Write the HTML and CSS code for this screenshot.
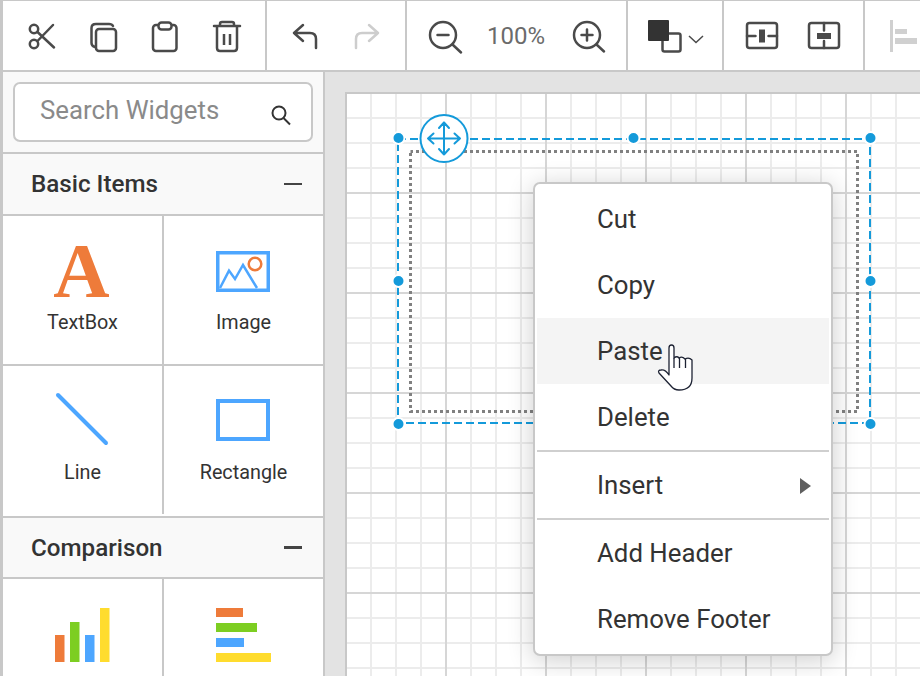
FILE: index.html
```html
<!DOCTYPE html>
<html lang="en">
<head>
<meta charset="utf-8">
<title>Report Designer</title>
<link rel="stylesheet" href="styles.css">
</head>
<body>
<div class="app">
  <header class="toolbar">
    <div class="tgroup g1">
      <button class="tbtn"><svg class="ico" viewBox="0 0 36 36"><circle cx="11" cy="11" r="4.2"/><circle cx="11" cy="26" r="4.2"/><path d="M30 7 14.500 23M14.500 14 31 29.500"/></svg></button>
      <button class="tbtn"><svg class="ico" viewBox="0 0 36 36"><rect x="11" y="11" width="20" height="22" rx="3"/><path d="M28 8Q27 6 24 6H11Q6.500 6 6.500 10V25Q6.500 28 10 29"/></svg></button>
      <button class="tbtn"><svg class="ico" viewBox="0 0 36 36"><rect x="6" y="7" width="23.500" height="26" rx="3"/><rect class="wf" x="11.500" y="4.500" width="13" height="7" rx="3"/></svg></button>
      <button class="tbtn"><svg class="ico" viewBox="0 0 36 36"><path d="M5 8H31M11 8V6Q11 4 13 4H23Q25 4 25 6V8M8 8V30Q8 33 11 33H25Q28 33 28 30V8"/><path class="thick" d="M15 16V27M21 16V27"/></svg></button>
    </div>
    <div class="tgroup g2">
      <button class="tbtn"><svg class="ico" viewBox="0 0 36 36"><path d="M16 7 7 15 16 23M7 15H23Q29 15 29 21V30"/></svg></button>
      <button class="tbtn off"><svg class="ico" viewBox="0 0 36 36"><path d="M20 7 29 15 20 23M29 15H13Q7 15 7 21V30"/></svg></button>
    </div>
    <div class="tgroup g3">
      <button class="tbtn"><svg class="ico" viewBox="0 0 36 36"><circle cx="17" cy="17" r="13"/><path d="M11.500 17H22.500M26.500 26.500 35 34.500"/></svg></button>
      <span class="zoomval">100%</span>
      <button class="tbtn"><svg class="ico" viewBox="0 0 36 36"><circle cx="17" cy="17" r="13"/><path d="M11.500 17H22.500M17 11.500V22.500M26.500 26.500 34 33.500"/></svg></button>
    </div>
    <div class="tgroup g4">
      <svg class="colorico" viewBox="0 0 60 36"><rect class="c-back" x="15.500" y="15.500" width="18" height="18" rx="2"/><rect class="c-front" x="1" y="2" width="21" height="21" rx="1"/><path class="c-chev" d="M42 18 49 24.500 56 18"/></svg>
    </div>
    <div class="tgroup g5">
      <button class="tbtn"><svg class="ico" viewBox="0 0 36 36"><rect x="3" y="5" width="30" height="25" rx="2.500"/><path d="M3 18H11.500M24.500 18H33"/><rect class="fill" x="15" y="11.500" width="6" height="13"/></svg></button>
      <button class="tbtn"><svg class="ico" viewBox="0 0 36 36"><rect x="3" y="5" width="30" height="25" rx="2.500"/><path d="M18 5V12.500M18 23V30"/><rect class="fill" x="11" y="15" width="14" height="6"/></svg></button>
    </div>
    <div class="tgroup g6">
      <svg class="alignico" viewBox="0 0 31 36"><rect x="0" y="2" width="3" height="32"/><rect x="5" y="11" width="12" height="5"/><rect x="5" y="20" width="22" height="6"/></svg>
    </div>
  </header>
  <div class="main">
    <aside class="sidebar">
      <div class="searchwrap">
        <div class="search">
          <span class="search-text">Search Widgets</span>
          <svg class="search-ico" viewBox="0 0 22 22"><circle cx="9" cy="9" r="6.500"/><path d="M13.500 14 20 20.500"/></svg>
        </div>
      </div>
      <div class="sechead"><span>Basic Items</span><i class="minus"></i></div>
      <div class="cells">
        <div class="cell row1"><span class="glyph-a">A</span><span class="lbl lbl-a">TextBox</span></div>
        <div class="cell row1"><svg class="wicon" viewBox="0 0 54 50"><rect class="blue-s" x="1.750" y="6.750" width="50.500" height="37.500"/><path class="blue-s thin" d="M4 42 13 24.600 19 33 27 19 41 42"/><circle class="org-s" cx="39" cy="18" r="6.300"/></svg><span class="lbl">Image</span></div>
        <div class="cell row2 short"><svg class="wicon" viewBox="0 0 54 50"><path class="blue-s round" d="M3 2 51 50"/></svg><span class="lbl">Line</span></div>
        <div class="cell row2"><svg class="wicon" viewBox="0 0 54 50"><rect class="blue-s wide" x="2" y="8" width="50" height="38"/></svg><span class="lbl">Rectangle</span></div>
      </div>
      <div class="sechead sec2"><span>Comparison</span><i class="minus"></i></div>
      <div class="cells">
        <div class="cell row3"><svg class="wicon" viewBox="0 0 56 56"><rect class="o" x="1" y="27" width="9.500" height="27"/><rect class="g" x="16" y="14" width="9.500" height="40"/><rect class="b" x="31" y="27" width="9.500" height="27"/><rect class="y" x="46" y="0" width="9.500" height="54"/></svg></div>
        <div class="cell row3"><svg class="wicon" viewBox="0 0 56 56"><rect class="o" x="1" y="0" width="27" height="9"/><rect class="g" x="1" y="15" width="41" height="9"/><rect class="b" x="1" y="30" width="28" height="9"/><rect class="y" x="1" y="45" width="55" height="9"/></svg></div>
      </div>
    </aside>
    <section class="workspace">
      <div class="canvas">
        <svg class="overlay" width="573" height="582" viewBox="347 94 573 582">
          <rect class="dots" x="410.500" y="151.500" width="447" height="260"/>
          <rect class="dash" x="398" y="139" width="472" height="284"/>
          <g class="handles">
            <circle cx="398.500" cy="138" r="6"/><circle cx="633.500" cy="138" r="6"/><circle cx="870.500" cy="138" r="6"/>
            <circle cx="398.500" cy="281" r="6"/><circle cx="870.500" cy="281" r="6"/>
            <circle cx="398.500" cy="424" r="6"/><circle cx="870.500" cy="424" r="6"/>
          </g>
          <circle class="mover" cx="444" cy="138.500" r="23.500"/>
          <path class="arrows" d="M428 138.500H460M444 122.500V154.500M433.500 133.500 428 138.500 433.500 143.500M454.500 133.500 460 138.500 454.500 143.500M439 128 444 122.500 449 128M439 149 444 154.500 449 149"/>
        </svg>
        <ul class="menu">
          <li>Cut</li>
          <li>Copy</li>
          <li class="hover">Paste</li>
          <li>Delete</li>
          <li class="sep"></li>
          <li class="sub">Insert<i class="tri"></i></li>
          <li class="sep"></li>
          <li>Add Header</li>
          <li>Remove Footer</li>
        </ul>
        <svg class="hand" width="42" height="52" viewBox="655 342 42 52"><path class="hand-o" d="M669 375V348Q669 345 671.500 345Q674 345 674 348V358Q677 355.500 679 358Q682 356 685 359Q689 357 692 360V378Q692 390 679 390Q674 390 671 386L659 373Q657.500 370 661 370Q665 369 669 375Z"/><path class="hand-l" d="M674 358V368M679.500 358V368M685.500 359V368"/></svg>
      </div>
    </section>
  </div>
</div>
</body>
</html>
```
FILE: styles.css
```css
* { box-sizing: border-box; }
html, body { margin: 0; padding: 0; height: 100%; overflow: hidden; }
body { font-family: Roboto, "Liberation Sans", sans-serif; color: #333; background: #fff; }
.app { width: 920px; height: 676px; display: flex; flex-direction: column; border-left: 3px solid #c8c8c8; border-top: 1px solid #c8c8c8; overflow: hidden; }

.toolbar { height: 71px; flex: none; display: flex; background: #fff; border-bottom: 2px solid #c8c8c8; }
.tgroup { display: flex; align-items: center; border-right: 2px solid #c8c8c8; height: 100%; flex: none; }
.g1 { width: 264px; padding-left: 7px; }
.g2 { width: 140px; padding-left: 7px; }
.g3 { width: 221px; padding-left: 6px; }
.g4 { width: 96px; justify-content: center; }
.g5 { width: 141px; padding-left: 7px; }
.g6 { flex: 1; border-right: 0; padding-left: 25px; }
.tbtn { width: 62px; height: 36px; padding: 0; margin: 0; border: 0; background: none; display: flex; align-items: center; justify-content: center; }
.ico { width: 36px; height: 36px; fill: none; stroke: #4a4a4a; stroke-width: 2.500; stroke-linecap: round; stroke-linejoin: round; overflow: visible; }
.ico .wf { fill: #fff; }
.ico .thick { stroke-width: 2.500; stroke-linecap: butt; }
.ico .fill { fill: #4a4a4a; stroke: none; }
.off .ico { stroke: #cdcdcd; }
.zoomval { width: 82px; text-align: center; font-size: 24px; color: #6b6b6b; flex: none; }
.colorico { width: 60px; height: 36px; margin-left: 3px; overflow: visible; }
.c-front { fill: #333; }
.c-back { fill: #fff; stroke: #4a4a4a; stroke-width: 2.500; }
.c-chev { fill: none; stroke: #4a4a4a; stroke-width: 1.500; }
.alignico { width: 31px; height: 36px; fill: #d0d0d0; }

.main { flex: 1; display: flex; min-height: 0; }
.sidebar { width: 322px; flex: none; display: flex; flex-direction: column; background: #fff; border-right: 2px solid #c8c8c8; }
.searchwrap { height: 82px; flex: none; padding: 10px 10px 0; background: #f9f9f9; border-bottom: 2px solid #c8c8c8; }
.search { height: 60px; background: #fff; border: 2px solid #c8c8c8; border-radius: 7px; display: flex; align-items: center; justify-content: space-between; padding: 0 19px 0 25px; }
.search-text { font-size: 25.800px; color: #8a8a8a; margin-top: -5px; }
.search-ico { width: 22px; height: 22px; margin-top: 5px; fill: none; stroke: #333; stroke-width: 2; }
.sechead { height: 62px; flex: none; display: flex; align-items: center; justify-content: space-between; background: #f9f9f9; border-bottom: 2px solid #c8c8c8; padding: 0 21px 0 28px; font-size: 24.200px; font-weight: 500; color: #333; }
.sec2 { border-top: 2px solid #c8c8c8; height: 63px; }
.minus { display: block; width: 18px; height: 2.500px; background: #444; }
.cells { display: grid; grid-template-columns: 161px 159px; }
.cell { display: flex; flex-direction: column; align-items: center; border-bottom: 2px solid #c8c8c8; overflow: hidden; }
.cell:nth-child(odd) { border-right: 2px solid #c8c8c8; }
.row1 { height: 150px; padding-top: 28px; }
.row2 { height: 150px; padding-top: 27px; border-bottom: 0; }
.row2.short { height: 148px; }
.row3 { height: 100px; padding-top: 29px; border-bottom: 0; }
.glyph-a { font-family: "Liberation Serif", serif; font-weight: 700; font-size: 78px; line-height: 60px; color: #ee7b3a; height: 60px; margin-top: -3px; margin-left: -2px; }
.lbl { font-size: 19.800px; color: #333; margin-top: 3px; }
.lbl.lbl-a { margin-top: 10px; }
.wicon { width: 54px; height: 50px; overflow: visible; display: block; margin: 0 0 15px -2px; }
.row1 .wicon { margin-top: 2px; margin-bottom: 12px; }
.row3 .wicon { width: 56px; height: 56px; }
.blue-s { fill: none; stroke: #4da6ff; stroke-width: 3.500; }
.blue-s.thin { stroke-width: 2.500; }
.blue-s.round { stroke-width: 4; stroke-linecap: round; }
.blue-s.wide { stroke-width: 4; }
.org-s { fill: none; stroke: #ee7b3a; stroke-width: 2.500; }
.o { fill: #ee7b3a; }
.g { fill: #7dce22; }
.b { fill: #4da6ff; }
.y { fill: #ffdc2e; }

.workspace { flex: 1; display: flex; min-width: 0; background: #e3e3e3; padding: 20px 0 0 20px; }
.canvas { position: relative; flex: 1; border-left: 2px solid #c8c8c8; border-top: 2px solid #c8c8c8;
  background-color: #fff;
  background-image:
    linear-gradient(90deg, transparent 98px, #d6d6d6 98px),
    linear-gradient(180deg, transparent 98px, #d6d6d6 98px),
    linear-gradient(90deg, transparent 23px, #ececec 23px),
    linear-gradient(180deg, transparent 23px, #ececec 23px);
  background-size: 100px 100%, 100% 100px, 25px 100%, 100% 25px;
}
.overlay { position: absolute; left: 0; top: 0; overflow: visible; }
.dots { fill: none; stroke: #808080; stroke-width: 3; stroke-dasharray: 3 3; stroke-dashoffset: .5; }
.dash { fill: none; stroke: #149ada; stroke-width: 2; stroke-dasharray: 8 4; }
.handles circle { fill: #149ada; stroke: #fff; stroke-width: 2; }
.mover { fill: #fff; stroke: #149ada; stroke-width: 2; }
.arrows { fill: none; stroke: #149ada; stroke-width: 2; stroke-linecap: round; stroke-linejoin: round; }

.menu { position: absolute; left: 186px; top: 88px; width: 300px; margin: 0; padding: 2px; list-style: none; background: #fff; border: 2px solid #c8c8c8; border-radius: 7px; box-shadow: 0 4px 26px rgba(0,0,0,.2); font-size: 25.800px; color: #333; }
.menu li { height: 66px; line-height: 66px; padding-left: 60px; position: relative; }
.menu li.hover { background: #f4f4f4; }
.menu li.sep { height: 2px; background: #cfcfcf; padding: 0; }
.tri { position: absolute; left: 263px; top: 26px; width: 0; height: 0; border-left: 11px solid #5f5f5f; border-top: 8px solid transparent; border-bottom: 8px solid transparent; }
.hand { position: absolute; left: 308px; top: 248px; overflow: visible; }
.hand-o { fill: #fff; stroke: #1d2233; stroke-width: 1.300; stroke-linejoin: round; }
.hand-l { fill: none; stroke: #1d2233; stroke-width: 1.300; }
```
